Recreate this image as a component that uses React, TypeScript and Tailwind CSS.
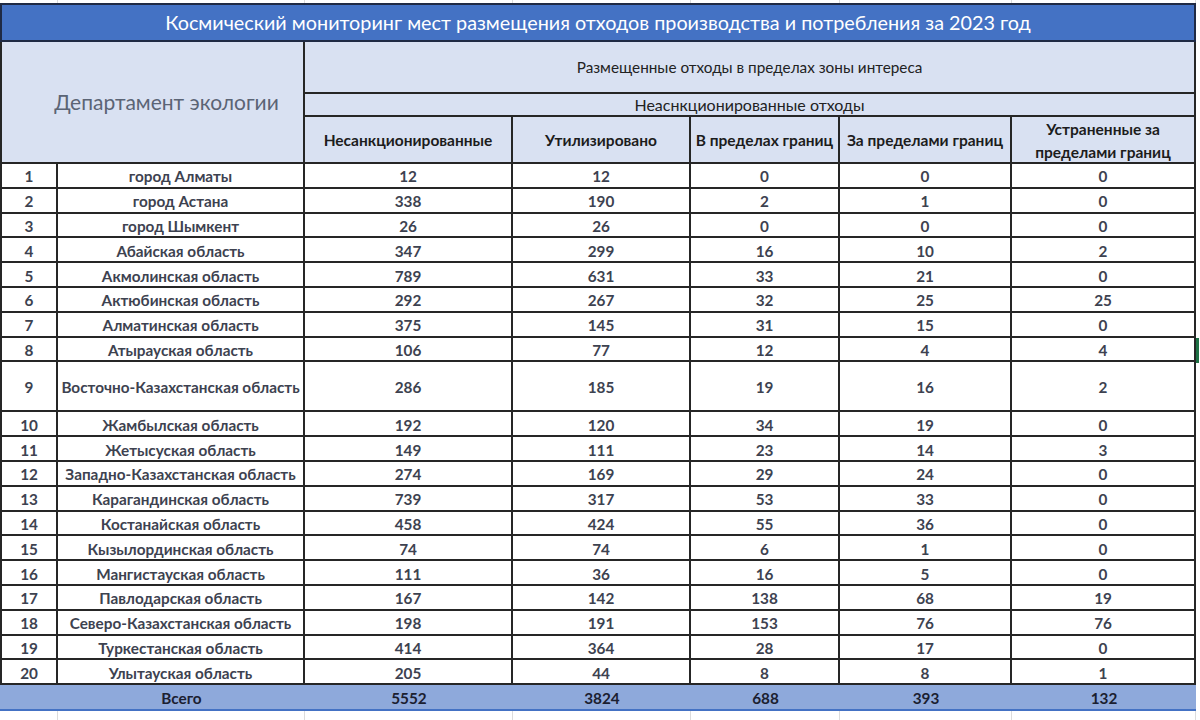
import React from "react";

type Row = [number, string, number, number, number, number, number];

const rows: Row[] = [
  [1, "город Алматы", 12, 12, 0, 0, 0],
  [2, "город Астана", 338, 190, 2, 1, 0],
  [3, "город Шымкент", 26, 26, 0, 0, 0],
  [4, "Абайская область", 347, 299, 16, 10, 2],
  [5, "Акмолинская область", 789, 631, 33, 21, 0],
  [6, "Актюбинская область", 292, 267, 32, 25, 25],
  [7, "Алматинская область", 375, 145, 31, 15, 0],
  [8, "Атырауская область", 106, 77, 12, 4, 4],
  [9, "Восточно-Казахстанская область", 286, 185, 19, 16, 2],
  [10, "Жамбылская область", 192, 120, 34, 19, 0],
  [11, "Жетысуская область", 149, 111, 23, 14, 3],
  [12, "Западно-Казахстанская область", 274, 169, 29, 24, 0],
  [13, "Карагандинская область", 739, 317, 53, 33, 0],
  [14, "Костанайская область", 458, 424, 55, 36, 0],
  [15, "Кызылординская область", 74, 74, 6, 1, 0],
  [16, "Мангистауская область", 111, 36, 16, 5, 0],
  [17, "Павлодарская область", 167, 142, 138, 68, 19],
  [18, "Северо-Казахстанская область", 198, 191, 153, 76, 76],
  [19, "Туркестанская область", 414, 364, 28, 17, 0],
  [20, "Улытауская область", 205, 44, 8, 8, 1],
];

const totals = [5552, 3824, 688, 393, 132];

const colWidths = ["w-[58px]", "w-[247px]", "w-[208px]", "w-[178px]", "w-[149px]", "w-[172px]", "w-[184px]"];

const cell = "flex items-center justify-center border-r-2 border-b-2 border-[#262626]";
const head = `${cell} bg-[#D9E1F2]`;
const colHead = `${head} h-[47px] pt-[2px] text-[15.5px] font-bold text-[#1c1c1c] text-center leading-[23px]`;
const total = "flex h-[26px] pt-[3px] items-center justify-center border-b-2 border-[#4472C4] bg-[#8EA9DB] text-[15.3px] font-bold text-[#1b2030]";

function SheetLines({ h }: { h: string }) {
  return (
    <div className={`flex ${h}`}>
      {colWidths.map((w, i) => (
        <div key={i} className={`${w} border-r border-[#dcdcdc]`} />
      ))}
    </div>
  );
}

export default function App() {
  return (
    <div className="relative w-[1200px] h-[720px] overflow-hidden bg-white font-['Lato','Open_Sans',sans-serif]">
      <SheetLines h="h-[3px]" />
      <div className="grid w-[1196px] grid-cols-[58px_247px_208px_178px_149px_172px_184px]">
        <div className="col-span-7 flex h-[39px] items-center justify-center border-2 border-[#1f2a44] bg-[#4472C4] text-[19.8px] text-white">
          Космический мониторинг мест размещения отходов производства и потребления за 2023 год
        </div>

        <div className={`${head} col-span-2 row-span-3 border-l-2 pl-[28px] text-[21px] text-[#5b6475]`}>
          Департамент экологии
        </div>
        <div className={`${head} col-span-5 h-[52px] text-[15.3px] text-[#222]`}>
          Размещенные отходы в пределах зоны интереса
        </div>
        <div className={`${head} col-span-5 h-[23px] text-[16px] text-[#222]`}>
          Неаснкционированные отходы
        </div>
        <div className={colHead}>Несанкционированные</div>
        <div className={colHead}>Утилизировано</div>
        <div className={colHead}>В пределах границ</div>
        <div className={colHead}>За пределами границ</div>
        <div className={colHead}>
          Устраненные за
          <br />
          пределами границ
        </div>

        {rows.map((r) => {
          const h = r[0] === 9 ? "h-[50px]" : "h-[24.8px]";
          return r.map((v, i) => (
            <div
              key={`${r[0]}-${i}`}
              className={`${cell} ${h} ${i === 0 ? "border-l-2" : ""} pt-[3px] text-[15.3px] font-bold text-[#3d4250]`}
            >
              {v}
            </div>
          ));
        })}

        <div className="h-[26px] border-b-2 border-[#4472C4] bg-[#8EA9DB]" />
        <div className={total}>Всего</div>
        {totals.map((t, i) => (
          <div key={i} className={total}>
            {t}
          </div>
        ))}
      </div>
      <SheetLines h="h-[10px]" />
      <div className="absolute left-[1196px] top-[338px] h-[25px] w-[3px] bg-[#1e7145]" />
    </div>
  );
}
